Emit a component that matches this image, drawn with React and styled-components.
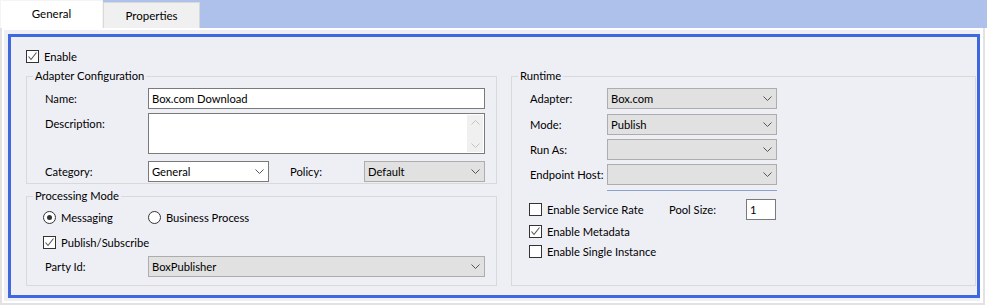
import styled, { createGlobalStyle } from 'styled-components'

const GlobalStyle = createGlobalStyle`
  html, body {
    margin: 0;
    padding: 0;
    background: #ffffff;
  }
  body {
    font-family: Lato, "Liberation Sans", sans-serif;
    font-size: 11.2px;
    color: #000000;
  }
`

const Window = styled.div`
  width: 987px;
  height: 305px;
  display: flex;
  flex-direction: column;
`

const TabStrip = styled.div`
  height: 28px;
  display: flex;
  align-items: flex-end;
  background: #adc1ea;
`

const Tab = styled.div`
  width: ${({ $width }) => $width}px;
  height: ${({ $active }) => ($active ? 28 : 26)}px;
  box-sizing: border-box;
  display: flex;
  align-items: center;
  justify-content: center;
  font-size: 11.5px;
  background: ${({ $active }) => ($active ? '#ffffff' : '#f0f0f0')};
  border: 1px solid ${({ $active }) => ($active ? '#f4f4f4' : '#d9d9d9')};
  border-bottom: none;
  padding-bottom: ${({ $active }) => ($active ? 2 : 0)}px;
`

const TabPage = styled.div`
  flex: 1;
  margin-right: 2px;
  background: #ffffff;
  border: 2px solid #e2e2e2;
  border-top: none;
  padding: 2px 3px 2px 2px;
  display: flex;
`

const Surface = styled.div`
  flex: 1;
  background: #eeeff5;
  padding: 4px 0 3px 4px;
  display: flex;
`

const Frame = styled.div`
  flex: 1;
  border: 3px solid #3f68e0;
  padding: 13px 1px 9px 15px;
  display: flex;
  flex-direction: column;
`

const Columns = styled.div`
  flex: 1;
  margin-top: 5px;
  display: grid;
  grid-template-columns: 471px 465px;
  column-gap: 14px;
`

const Stack = styled.div`
  display: flex;
  flex-direction: column;
  gap: 4px;
`

const Group = styled.fieldset`
  margin: 0;
  padding: 0;
  min-width: 0;
  border: 1px solid #d9d9d9;
  flex: ${({ $grow }) => ($grow ? 1 : 'none')};
  height: ${({ $height }) => ($height ? `${$height}px` : 'auto')};
  box-sizing: border-box;
`

const Legend = styled.legend`
  margin-left: 6px;
  padding: 0 2px;
  line-height: 16px;
`

const Body = styled.div`
  display: flex;
  flex-direction: column;
  padding: ${({ $pad }) => $pad};
`

const Row = styled.div`
  display: grid;
  grid-template-columns: ${({ $cols }) => $cols};
  align-items: ${({ $center }) => ($center ? 'center' : 'start')};
  margin-top: ${({ $mt }) => $mt || 0}px;
  margin-left: ${({ $ml }) => $ml || 0}px;
`

const Label = styled.span`
  line-height: 21px;
  white-space: nowrap;
`

const TextBox = styled.div`
  height: 21px;
  box-sizing: border-box;
  background: #ffffff;
  border: 1px solid #7a7a7a;
  padding: 0 3px;
  line-height: 19px;
`

const TextArea = styled.div`
  height: 41px;
  box-sizing: border-box;
  background: #ffffff;
  border: 1px solid #7a7a7a;
  display: flex;
  justify-content: flex-end;
  padding: 1px;
`

const ScrollBar = styled.div`
  width: 16px;
  background: #f0f0f0;
  display: flex;
  flex-direction: column;
  justify-content: space-between;
  align-items: center;
  padding: 5px 0 4px;
`

const Select = styled.div`
  height: 21px;
  box-sizing: border-box;
  display: flex;
  align-items: center;
  justify-content: space-between;
  background: ${({ $white }) => ($white ? '#ffffff' : '#e1e1e1')};
  border: 1px solid ${({ $white }) => ($white ? '#7a7a7a' : '#adadad')};
  padding: 0 4px 0 3px;
`

const Line = styled.div`
  display: flex;
  align-items: center;
  margin-top: ${({ $mt }) => $mt || 0}px;
  margin-left: ${({ $ml }) => $ml || 0}px;
`

const Check = styled.div`
  width: 13px;
  height: 13px;
  box-sizing: border-box;
  border: 1px solid #333333;
  background: #ffffff;
  display: flex;
  align-items: center;
  justify-content: center;
  flex: none;
`

const Radio = styled.div`
  width: 13px;
  height: 13px;
  box-sizing: border-box;
  border: 1px solid #333333;
  border-radius: 50%;
  background: #ffffff;
  display: flex;
  align-items: center;
  justify-content: center;
  flex: none;
  &::after {
    content: '';
    width: 5px;
    height: 5px;
    border-radius: 50%;
    background: ${({ $on }) => ($on ? '#333333' : 'transparent')};
  }
`

const Option = styled.label`
  display: flex;
  align-items: center;
  gap: 5px;
  line-height: 13px;
`

const FocusLine = styled.div`
  width: 170px;
  height: 1px;
  margin: 5px 0 0 77px;
  background: #8ca0d2;
`

const Chevron = ({ up, faint }) => (
  <svg width="9" height="5" viewBox="0 0 9 5">
    <polyline
      points={up ? '0.5,4.5 4.5,0.5 8.5,4.5' : '0.5,0.5 4.5,4.5 8.5,0.5'}
      fill="none"
      stroke={faint ? '#c2c2c2' : '#555555'}
      strokeWidth="1"
    />
  </svg>
)

const Tick = () => (
  <svg width="11" height="11" viewBox="0 0 11 11">
    <polyline points="1.5,5.5 4,8.5 9.5,1.5" fill="none" stroke="#555555" strokeWidth="1.1" />
  </svg>
)

const CheckOption = ({ checked, children }) => (
  <Option>
    <Check>{checked && <Tick />}</Check>
    {children}
  </Option>
)

const Combo = ({ value, white }) => (
  <Select $white={white}>
    <span>{value}</span>
    <Chevron />
  </Select>
)

export default function App() {
  return (
    <>
      <GlobalStyle />
      <Window>
        <TabStrip>
          <Tab $active $width={103}>General</Tab>
          <Tab $width={97}>Properties</Tab>
        </TabStrip>
        <TabPage>
          <Surface>
            <Frame>
              <Line>
                <CheckOption checked>Enable</CheckOption>
              </Line>
              <Columns>
                <Stack>
                  <Group $height={116}>
                    <Legend>Adapter Configuration</Legend>
                    <Body $pad="4px 11px 0 18px">
                      <Row $cols="103px 1fr">
                        <Label>Name:</Label>
                        <TextBox>Box.com Download</TextBox>
                      </Row>
                      <Row $cols="103px 1fr" $mt={4}>
                        <Label>Description:</Label>
                        <TextArea>
                          <ScrollBar>
                            <Chevron up faint />
                            <Chevron faint />
                          </ScrollBar>
                        </TextArea>
                      </Row>
                      <Row $cols="103px 121px 21px 74px 1fr" $mt={7}>
                        <Label>Category:</Label>
                        <Combo value="General" white />
                        <span />
                        <Label>Policy:</Label>
                        <Combo value="Default" />
                      </Row>
                    </Body>
                  </Group>
                  <Group $grow>
                    <Legend>Processing Mode</Legend>
                    <Body $pad="7px 11px 0 16px">
                      <Row $cols="105px 1fr">
                        <Option>
                          <Radio $on />
                          Messaging
                        </Option>
                        <Option>
                          <Radio />
                          Business Process
                        </Option>
                      </Row>
                      <Line $mt={12}>
                        <CheckOption checked>Publish/Subscribe</CheckOption>
                      </Line>
                      <Row $cols="103px 1fr" $mt={7} $ml={2}>
                        <Label>Party Id:</Label>
                        <Combo value="BoxPublisher" />
                      </Row>
                    </Body>
                  </Group>
                </Stack>
                <Group>
                  <Legend>Runtime</Legend>
                  <Body $pad="4px 0 0 18px">
                    <Row $cols="77px 170px">
                      <Label>Adapter:</Label>
                      <Combo value="Box.com" />
                    </Row>
                    <Row $cols="77px 170px" $mt={5}>
                      <Label>Mode:</Label>
                      <Combo value="Publish" />
                    </Row>
                    <Row $cols="77px 170px" $mt={4}>
                      <Label>Run As:</Label>
                      <Combo value="" />
                    </Row>
                    <Row $cols="77px 170px" $mt={4}>
                      <Label>Endpoint Host:</Label>
                      <Combo value="" />
                    </Row>
                    <FocusLine />
                    <Row $cols="140px 77px 30px" $mt={8} $ml={-1} $center>
                      <CheckOption>Enable Service Rate</CheckOption>
                      <Label>Pool Size:</Label>
                      <TextBox>1</TextBox>
                    </Row>
                    <Line $mt={5} $ml={-1}>
                      <CheckOption checked>Enable Metadata</CheckOption>
                    </Line>
                    <Line $mt={7} $ml={-1}>
                      <CheckOption>Enable Single Instance</CheckOption>
                    </Line>
                  </Body>
                </Group>
              </Columns>
            </Frame>
          </Surface>
        </TabPage>
      </Window>
    </>
  )
}
